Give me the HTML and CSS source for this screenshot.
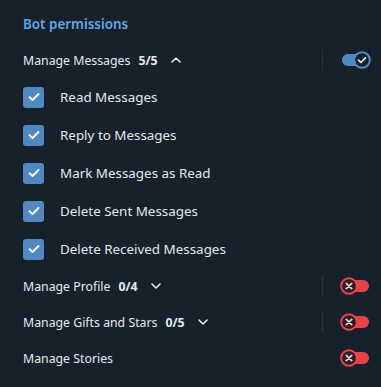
FILE: index.html
```html
<!DOCTYPE html>
<html>
<head>
<meta charset="utf-8">
<link rel="stylesheet" href="styles.css">
</head>
<body>
<div class="panel">
  <div class="title">Bot permissions</div>

  <div class="group">
    <div class="group-label">Manage Messages<b>5/5</b>
      <svg class="chev" width="10" height="6" viewBox="0 0 10 6"><path d="M1 5 L5 1 L9 5" fill="none" stroke="#e4e9ee" stroke-width="1.6" stroke-linecap="round" stroke-linejoin="round"/></svg>
    </div>
    <span class="divider"></span>
    <span class="toggle on">
      <span class="track"></span>
      <svg class="knob" width="18" height="18" viewBox="0 0 18 18"><circle cx="9" cy="9" r="7.8" fill="#17212b" stroke="#5288c1" stroke-width="2"/><path d="M5.5 9.2 L7.9 11.5 L12.5 6.8" fill="none" stroke="#dfe9f3" stroke-width="1.7" stroke-linecap="round" stroke-linejoin="round"/></svg>
    </span>
  </div>

  <div class="check-row"><span class="box"><svg width="12" height="10" viewBox="0 0 12 10"><path d="M1.5 5.2 L4.5 8 L10.5 2" fill="none" stroke="#fff" stroke-width="1.8" stroke-linecap="round" stroke-linejoin="round"/></svg></span>Read Messages</div>
  <div class="check-row"><span class="box"><svg width="12" height="10" viewBox="0 0 12 10"><path d="M1.5 5.2 L4.5 8 L10.5 2" fill="none" stroke="#fff" stroke-width="1.8" stroke-linecap="round" stroke-linejoin="round"/></svg></span>Reply to Messages</div>
  <div class="check-row"><span class="box"><svg width="12" height="10" viewBox="0 0 12 10"><path d="M1.5 5.2 L4.5 8 L10.5 2" fill="none" stroke="#fff" stroke-width="1.8" stroke-linecap="round" stroke-linejoin="round"/></svg></span>Mark Messages as Read</div>
  <div class="check-row"><span class="box"><svg width="12" height="10" viewBox="0 0 12 10"><path d="M1.5 5.2 L4.5 8 L10.5 2" fill="none" stroke="#fff" stroke-width="1.8" stroke-linecap="round" stroke-linejoin="round"/></svg></span>Delete Sent Messages</div>
  <div class="check-row"><span class="box"><svg width="12" height="10" viewBox="0 0 12 10"><path d="M1.5 5.2 L4.5 8 L10.5 2" fill="none" stroke="#fff" stroke-width="1.8" stroke-linecap="round" stroke-linejoin="round"/></svg></span>Delete Received Messages</div>

  <div class="group small">
    <div class="group-label">Manage Profile<b>0/4</b>
      <svg class="chev" width="10" height="6" viewBox="0 0 10 6"><path d="M1 1 L5 5 L9 1" fill="none" stroke="#e4e9ee" stroke-width="1.6" stroke-linecap="round" stroke-linejoin="round"/></svg>
    </div>
    <span class="divider"></span>
    <span class="toggle off">
      <span class="track"></span>
      <svg class="knob" width="18" height="18" viewBox="0 0 18 18"><circle cx="9" cy="9" r="7.8" fill="#2a1c24" stroke="#e8434b" stroke-width="2"/><path d="M6.3 6.3 L11.7 11.7 M11.7 6.3 L6.3 11.7" fill="none" stroke="#f3cfd1" stroke-width="1.7" stroke-linecap="round"/></svg>
    </span>
  </div>

  <div class="group small">
    <div class="group-label">Manage Gifts and Stars<b>0/5</b>
      <svg class="chev" width="10" height="6" viewBox="0 0 10 6"><path d="M1 1 L5 5 L9 1" fill="none" stroke="#e4e9ee" stroke-width="1.6" stroke-linecap="round" stroke-linejoin="round"/></svg>
    </div>
    <span class="divider"></span>
    <span class="toggle off">
      <span class="track"></span>
      <svg class="knob" width="18" height="18" viewBox="0 0 18 18"><circle cx="9" cy="9" r="7.8" fill="#2a1c24" stroke="#e8434b" stroke-width="2"/><path d="M6.3 6.3 L11.7 11.7 M11.7 6.3 L6.3 11.7" fill="none" stroke="#f3cfd1" stroke-width="1.7" stroke-linecap="round"/></svg>
    </span>
  </div>

  <div class="group small">
    <div class="group-label">Manage Stories</div>
    <span class="toggle off">
      <span class="track"></span>
      <svg class="knob" width="18" height="18" viewBox="0 0 18 18"><circle cx="9" cy="9" r="7.8" fill="#2a1c24" stroke="#e8434b" stroke-width="2"/><path d="M6.3 6.3 L11.7 11.7 M11.7 6.3 L6.3 11.7" fill="none" stroke="#f3cfd1" stroke-width="1.7" stroke-linecap="round"/></svg>
    </span>
  </div>
</div>
<div class="footer"></div>
</body>
</html>
```

FILE: styles.css
```css
html, body {
  margin: 0;
  padding: 0;
}
body {
  width: 381px;
  height: 387px;
  overflow: hidden;
  background: #17212b;
  font-family: "Noto Sans", "Open Sans", sans-serif;
  color: #e4e9ee;
  font-size: 13px;
  display: flex;
  flex-direction: column;
}
.panel {
  padding: 14px 10px 0 23px;
  height: 366px;
}
.title {
  line-height: 20px;
  font-size: 13.4px;
  font-weight: 600;
  color: #62a6e2;
}
.group {
  display: flex;
  align-items: center;
  height: 36px;
  margin-top: 8px;
}
.group.small {
  margin-top: 0;
}
.group-label {
  flex: 1;
  display: flex;
  align-items: center;
  white-space: nowrap;
  font-size: 12.3px;
}
.group-label b {
  font-weight: 700;
  margin-left: 8px;
}
.chev {
  margin-left: 13px;
}
.divider {
  width: 1px;
  height: 22px;
  background: #263341;
  margin-right: 18px;
}
.toggle {
  position: relative;
  width: 30px;
  height: 18px;
  display: block;
}
.toggle .track {
  position: absolute;
  top: 3px;
  height: 12px;
  left: 1px;
  right: 2px;
  border-radius: 6px;
}
.toggle.on .track { background: #5288c1; }
.toggle.off .track { background: #e8434b; }
.toggle .knob {
  position: absolute;
  top: 0;
}
.toggle.on .knob { right: 0; }
.toggle.off .knob { left: -1px; }
.check-row {
  display: flex;
  align-items: center;
  height: 38px;
  font-size: 13.4px;
}
.box {
  width: 21px;
  height: 21px;
  border-radius: 3px;
  background: #5288c1;
  display: flex;
  align-items: center;
  justify-content: center;
  margin-right: 16px;
}
.footer {
  margin-top: 14px;
  flex: 1;
  background: #1c2631;
}
```
